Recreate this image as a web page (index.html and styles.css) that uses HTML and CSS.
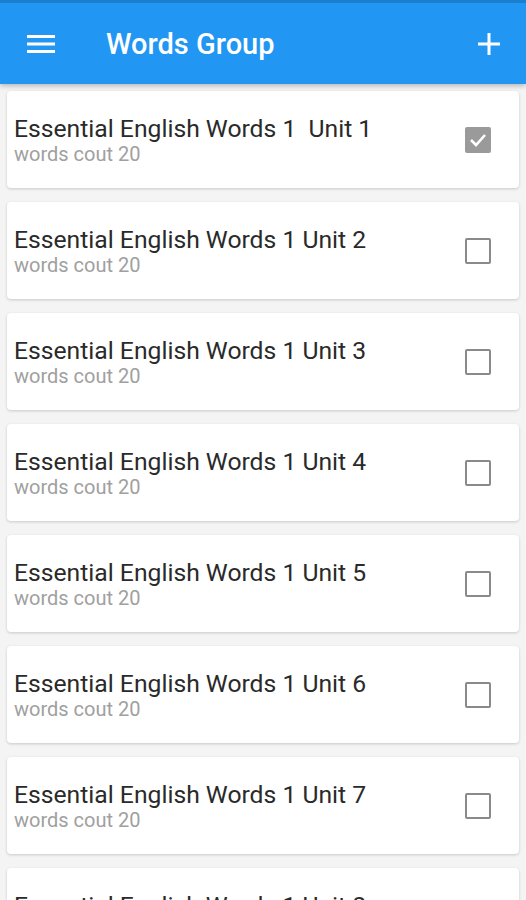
FILE: index.html
```html
<!DOCTYPE html>
<html lang="en">
  <head>
    <meta charset="UTF-8" />
    <meta name="viewport" content="width=device-width, initial-scale=1.0" />
    <title>Words Group</title>
    <link rel="stylesheet" href="styles.css">
  </head>
  <body>
    <header class="app-bar">
      <button class="icon-btn" aria-label="Menu">
        <svg width="28" height="20" viewBox="0 0 28 20">
          <rect x="0" y="1" width="28" height="3" fill="#fff" />
          <rect x="0" y="8.5" width="28" height="3" fill="#fff" />
          <rect x="0" y="16" width="28" height="3" fill="#fff" />
        </svg>
      </button>
      <h1 class="app-title">Words Group</h1>
      <button class="icon-btn add-btn" aria-label="Add">
        <svg width="22" height="22" viewBox="0 0 22 22">
          <rect x="9.5" y="0" width="3" height="22" fill="#fff" />
          <rect x="0" y="9.5" width="22" height="3" fill="#fff" />
        </svg>
      </button>
    </header>

    <main class="list">
      <div class="card">
        <div class="card-text">
          <p class="card-title">Essential English Words 1&nbsp; Unit 1</p>
          <p class="card-sub">words cout 20</p>
        </div>
        <span class="check checked">
          <svg width="18" height="14" viewBox="0 0 18 14">
            <path d="M2 7 L7 12 L16 2" fill="none" stroke="#fff" stroke-width="2.6" />
          </svg>
        </span>
      </div>
      <div class="card">
        <div class="card-text">
          <p class="card-title">Essential English Words 1 Unit 2</p>
          <p class="card-sub">words cout 20</p>
        </div>
        <span class="check"></span>
      </div>
      <div class="card">
        <div class="card-text">
          <p class="card-title">Essential English Words 1 Unit 3</p>
          <p class="card-sub">words cout 20</p>
        </div>
        <span class="check"></span>
      </div>
      <div class="card">
        <div class="card-text">
          <p class="card-title">Essential English Words 1 Unit 4</p>
          <p class="card-sub">words cout 20</p>
        </div>
        <span class="check"></span>
      </div>
      <div class="card">
        <div class="card-text">
          <p class="card-title">Essential English Words 1 Unit 5</p>
          <p class="card-sub">words cout 20</p>
        </div>
        <span class="check"></span>
      </div>
      <div class="card">
        <div class="card-text">
          <p class="card-title">Essential English Words 1 Unit 6</p>
          <p class="card-sub">words cout 20</p>
        </div>
        <span class="check"></span>
      </div>
      <div class="card">
        <div class="card-text">
          <p class="card-title">Essential English Words 1 Unit 7</p>
          <p class="card-sub">words cout 20</p>
        </div>
        <span class="check"></span>
      </div>
      <div class="card">
        <div class="card-text">
          <p class="card-title">Essential English Words 1 Unit 8</p>
          <p class="card-sub">words cout 20</p>
        </div>
        <span class="check"></span>
      </div>
    </main>
  </body>
</html>
```

FILE: styles.css
```css
* {
  box-sizing: border-box;
  margin: 0;
  padding: 0;
  font-family: Roboto, "Liberation Sans", sans-serif;
}

body {
  background-color: #f4f4f4;
  height: 900px;
  overflow: hidden;
}

.app-bar {
  display: flex;
  align-items: center;
  height: 84px;
  padding: 0 0 0 27px;
  background-color: #2196f3;
  border-top: 3px solid #1a7fcf;
  box-shadow: 0 2px 5px rgba(0, 0, 0, 0.25);
  color: #ffffff;
  position: relative;
  z-index: 1;
}

.icon-btn {
  display: flex;
  align-items: center;
  justify-content: center;
  background: none;
  border: none;
}

.app-title {
  flex: 1;
  margin-left: 51px;
  font-size: 29px;
  font-weight: 500;
}

.add-btn {
  margin-right: 26px;
}

.list {
  display: flex;
  flex-direction: column;
  gap: 14px;
  padding: 7px 7px 0;
}

.card {
  display: flex;
  align-items: center;
  flex-shrink: 0;
  height: 97px;
  padding: 0 28px 0 7px;
  background-color: #ffffff;
  border-radius: 4px;
  box-shadow: 0 1px 3px rgba(0, 0, 0, 0.18);
}

.card-text {
  flex: 1;
  padding-top: 2px;
}

.card-title {
  font-size: 24.7px;
  line-height: 28px;
  color: #2a2a2a;
}

.card-sub {
  margin-top: -2px;
  font-size: 20px;
  line-height: 26px;
  color: #a0a0a0;
}

.check {
  display: flex;
  align-items: center;
  justify-content: center;
  width: 26px;
  height: 26px;
  border: 2px solid #8a8a8a;
  border-radius: 2px;
}

.check.checked {
  background-color: #9a9a9a;
  border-color: #9a9a9a;
}
```
